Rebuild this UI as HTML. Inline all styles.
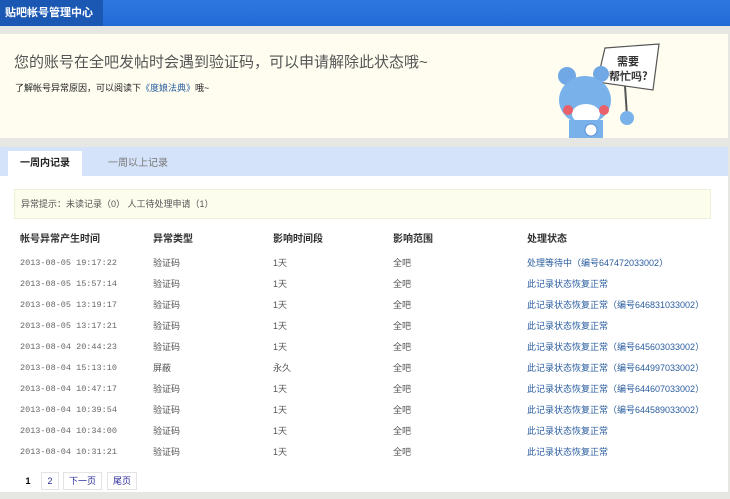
<!DOCTYPE html>
<html><head><meta charset="utf-8"><style>
*{margin:0;padding:0;box-sizing:border-box}
body{width:730px;height:499px;background:#e6e6e2;font-family:"Liberation Sans","Noto Sans CJK SC",sans-serif;font-size:12px;color:#333;position:relative;overflow:hidden}
.hd{position:absolute;left:0;top:0;width:730px;height:26px;background:linear-gradient(#2f77e0,#226ad6)}
.hd .t{position:absolute;left:0;top:0;width:103px;height:26px;background:#1b58b4;color:#fff;font-weight:bold;font-size:11px;line-height:26px;padding-left:5px;white-space:nowrap}
.ban{position:absolute;left:0;top:34px;width:728px;height:104px;background:#fefdf0;overflow:hidden}
.ban h1{position:absolute;left:14px;top:17px;font-size:15px;font-weight:normal;color:#555;white-space:nowrap}
.ban p{position:absolute;left:15px;top:47px;font-size:9px;color:#222}
.ban a{color:#2a5d9f}
.tabs{position:absolute;left:0;top:147px;width:728px;height:29px;background:#d4e3f9}
.tab1{position:absolute;left:8px;top:4px;width:74px;height:25px;background:#fff;font-weight:bold;font-size:10px;line-height:25px;text-align:center;color:#222}
.tab2{position:absolute;left:108px;top:4px;font-size:10px;line-height:25px;color:#777}
.main{position:absolute;left:0;top:176px;width:728px;height:316px;background:#fff}
.tip{position:absolute;left:14px;top:13px;width:697px;height:30px;background:#fdfdee;border:1px solid #efefd8;font-size:9px;line-height:28px;padding-left:6px;color:#555}
.row{position:absolute;left:0;width:728px;height:21px;font-size:9px;color:#555}
.row span{position:absolute;top:0;line-height:16px}
.row .a{left:20px;font-family:"Liberation Mono",monospace;font-size:8.5px;color:#666}.row .b{left:153px}.row .c{left:273px}.row .d{left:393px}.row .e{left:527px;color:#2a5d9f}
.th{font-weight:bold;color:#333}
.th span{font-size:10px}
.th .a{font-family:"Liberation Sans","Noto Sans CJK SC",sans-serif!important;font-size:10px!important;color:#333!important}
.pg{position:absolute;top:296px;height:18px;border:1px solid #e3e3e3;font-size:9px;line-height:16px;text-align:center;color:#2a2a9a}
</style></head><body>
<div class="hd"><div class="t">贴吧帐号管理中心</div></div>
<div class="ban">
<h1>您的账号在全吧发帖时会遇到验证码，可以申请解除此状态哦~</h1>
<p>了解帐号异常原因，可以阅读下<a>《度娘法典》</a>哦~</p>
<svg style="position:absolute;left:555px;top:0" width="110" height="104" viewBox="0 0 110 104">
<polygon points="50,14 104,10 98,56 42,48" fill="#fff" stroke="#555" stroke-width="1.2"/>
<line x1="70" y1="52" x2="72" y2="82" stroke="#555" stroke-width="2"/>
<text x="62" y="31" font-size="11" font-weight="bold" fill="#333" font-family="Noto Sans CJK SC">需要</text>
<text x="54" y="46" font-size="11" font-weight="bold" fill="#333" font-family="Noto Sans CJK SC">帮忙吗?</text>
<circle cx="12" cy="42" r="9" fill="#6fa8e4"/><circle cx="46" cy="40" r="8" fill="#6fa8e4"/>
<ellipse cx="30" cy="66" rx="26" ry="24" fill="#79b2ea"/>
<ellipse cx="31" cy="80" rx="14" ry="10" fill="#fff"/>
<circle cx="13" cy="76" r="5" fill="#e8606a"/><circle cx="49" cy="76" r="5" fill="#e8606a"/>
<rect x="14" y="86" width="34" height="18" fill="#79b2ea"/>
<circle cx="72" cy="84" r="7" fill="#79b2ea"/>
<circle cx="36" cy="96" r="6" fill="#fff" stroke="#5a90d0"/>
</svg>
</div>
<div class="tabs"><div class="tab1">一周内记录</div><div class="tab2">一周以上记录</div></div>
<div class="main">
<div class="tip">异常提示：未读记录（0） 人工待处理申请（1）</div>
<div class="row th" style="top:56px"><span class="a">帐号异常产生时间</span><span class="b">异常类型</span><span class="c">影响时间段</span><span class="d">影响范围</span><span class="e" style="color:#333">处理状态</span></div>
<div class="row" style="top:79px"><span class="a">2013-08-05 19:17:22</span><span class="b">验证码</span><span class="c">1天</span><span class="d">全吧</span><span class="e">处理等待中（编号647472033002）</span></div>
<div class="row" style="top:100px"><span class="a">2013-08-05 15:57:14</span><span class="b">验证码</span><span class="c">1天</span><span class="d">全吧</span><span class="e">此记录状态恢复正常</span></div>
<div class="row" style="top:121px"><span class="a">2013-08-05 13:19:17</span><span class="b">验证码</span><span class="c">1天</span><span class="d">全吧</span><span class="e">此记录状态恢复正常（编号646831033002）</span></div>
<div class="row" style="top:142px"><span class="a">2013-08-05 13:17:21</span><span class="b">验证码</span><span class="c">1天</span><span class="d">全吧</span><span class="e">此记录状态恢复正常</span></div>
<div class="row" style="top:163px"><span class="a">2013-08-04 20:44:23</span><span class="b">验证码</span><span class="c">1天</span><span class="d">全吧</span><span class="e">此记录状态恢复正常（编号645603033002）</span></div>
<div class="row" style="top:184px"><span class="a">2013-08-04 15:13:10</span><span class="b">屏蔽</span><span class="c">永久</span><span class="d">全吧</span><span class="e">此记录状态恢复正常（编号644997033002）</span></div>
<div class="row" style="top:205px"><span class="a">2013-08-04 10:47:17</span><span class="b">验证码</span><span class="c">1天</span><span class="d">全吧</span><span class="e">此记录状态恢复正常（编号644607033002）</span></div>
<div class="row" style="top:226px"><span class="a">2013-08-04 10:39:54</span><span class="b">验证码</span><span class="c">1天</span><span class="d">全吧</span><span class="e">此记录状态恢复正常（编号644589033002）</span></div>
<div class="row" style="top:247px"><span class="a">2013-08-04 10:34:00</span><span class="b">验证码</span><span class="c">1天</span><span class="d">全吧</span><span class="e">此记录状态恢复正常</span></div>
<div class="row" style="top:268px"><span class="a">2013-08-04 10:31:21</span><span class="b">验证码</span><span class="c">1天</span><span class="d">全吧</span><span class="e">此记录状态恢复正常</span></div>
<div class="pg" style="left:20px;width:16px;border-color:transparent;color:#000;font-weight:bold">1</div>
<div class="pg" style="left:41px;width:18px">2</div>
<div class="pg" style="left:63px;width:39px">下一页</div>
<div class="pg" style="left:107px;width:30px">尾页</div>
</div>
</body></html>
